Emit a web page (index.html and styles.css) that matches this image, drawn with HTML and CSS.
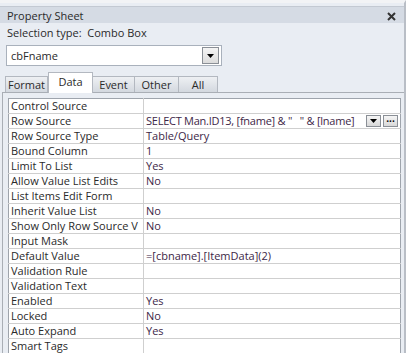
FILE: index.html
```html
<!DOCTYPE html>
<html>
  <head>
    <title>Property Sheet</title>
    <link rel="stylesheet" href="styles.css">
  </head>
  <body>
    <div class="sheet">
      <div class="titlebar">
        <span class="title">Property Sheet</span>
        <span class="close">
          <svg width="9" height="9" viewBox="0 0 9 9">
            <path d="M1 1 L8 8 M8 1 L1 8" stroke="#333" stroke-width="2" />
          </svg>
        </span>
      </div>
      <div class="seltype">Selection type:&nbsp; Combo Box</div>
      <div class="combo">
        <span class="combo-text">cbFname</span>
        <span class="combo-btn">
          <svg width="7" height="4" viewBox="0 0 7 4"><path d="M0 0 H7 L3.5 4 Z" fill="#000" /></svg>
        </span>
      </div>
      <div class="tabs">
        <div class="tab format">Format</div>
        <div class="tab active">Data</div>
        <div class="tab event">Event</div>
        <div class="tab other">Other</div>
        <div class="tab all">All</div>
      </div>
      <div class="pane">
        <table class="grid">
          <tr><td class="name">Control Source</td><td class="val"></td></tr>
          <tr>
            <td class="name">Row Source</td>
            <td class="val">
              <div class="rowsrc">
                <span class="sql">SELECT Man.ID13, [fname] &amp; "&nbsp;&nbsp;&nbsp;" &amp; [lname]</span>
                <span class="mini">
                  <svg width="7" height="4" viewBox="0 0 7 4"><path d="M0 0 H7 L3.5 4 Z" fill="#000" /></svg>
                </span>
                <span class="mini dots">&middot;&middot;&middot;</span>
              </div>
            </td>
          </tr>
          <tr><td class="name">Row Source Type</td><td class="val">Table/Query</td></tr>
          <tr><td class="name">Bound Column</td><td class="val">1</td></tr>
          <tr><td class="name">Limit To List</td><td class="val">Yes</td></tr>
          <tr><td class="name">Allow Value List Edits</td><td class="val">No</td></tr>
          <tr><td class="name">List Items Edit Form</td><td class="val"></td></tr>
          <tr><td class="name">Inherit Value List</td><td class="val">No</td></tr>
          <tr><td class="name">Show Only Row Source V</td><td class="val">No</td></tr>
          <tr><td class="name">Input Mask</td><td class="val"></td></tr>
          <tr><td class="name">Default Value</td><td class="val">=[cbname].[ItemData](2)</td></tr>
          <tr><td class="name">Validation Rule</td><td class="val"></td></tr>
          <tr><td class="name">Validation Text</td><td class="val"></td></tr>
          <tr><td class="name">Enabled</td><td class="val">Yes</td></tr>
          <tr><td class="name">Locked</td><td class="val">No</td></tr>
          <tr><td class="name">Auto Expand</td><td class="val">Yes</td></tr>
          <tr><td class="name">Smart Tags</td><td class="val"></td></tr>
        </table>
      </div>
    </div>
  </body>
</html>
```

FILE: styles.css
```css
body {
  margin: 0;
  font-family: "Open Sans", "Noto Sans", sans-serif;
  font-size: 11px;
  color: #2a2a2a;
  background: #e9edf3;
}

.sheet {
  height: 353px;
  box-sizing: border-box;
  border-top: 3px solid #f2f3f5;
  border-right: 2px solid #b9bec6;
  overflow: hidden;
  background: #e9edf3;
}

.titlebar {
  display: flex;
  align-items: center;
  justify-content: space-between;
  height: 16px;
  margin-top: 3px;
  padding: 0 8px 0 7px;
  background: #d5dbe4;
  border-top: 1px solid #c3c9d2;
}

.close {
  display: flex;
  margin-top: 2px;
}

.seltype {
  padding: 2px 7px 0;
  height: 17px;
}

.combo {
  display: flex;
  align-items: center;
  justify-content: space-between;
  width: 216px;
  height: 21px;
  box-sizing: border-box;
  margin: 3px 0 0 6px;
  padding: 0 2px 0 4px;
  background: #fff;
  border: 1px solid #a9b1bc;
}

.combo-btn {
  display: flex;
  align-items: center;
  justify-content: center;
  width: 15px;
  height: 15px;
  border: 1px solid #8a8f96;
  background: linear-gradient(#f4f4f4, #dcdcdc);
}

.tabs {
  display: flex;
  align-items: flex-end;
  height: 21px;
  margin: 5px 0 0 5px;
}

.tab {
  box-sizing: border-box;
  height: 16px;
  line-height: 15px;
  text-align: center;
  border: 1px solid #b3b8c0;
  border-bottom: none;
  border-left: none;
  background: linear-gradient(#eef0f3, #d3d8df);
}

.tab.format {
  width: 43px;
  border-left: 1px solid #b3b8c0;
}

.tab.active {
  width: 45px;
  height: 21px;
  line-height: 18px;
  background: #fff;
  border-left: 1px solid #b3b8c0;
  position: relative;
  top: 1px;
}

.tab.event {
  width: 42px;
}

.tab.other {
  width: 44px;
}

.tab.all {
  width: 39px;
}

.pane {
  margin: 0 0 0 2px;
  padding: 5px 3px 0 5px;
  height: 270px;
  border-top: 1px solid #a9aeb5;
  border-left: 1px solid #a9aeb5;
  background: #e9edf3;
}

.grid {
  width: 393px;
  border-collapse: collapse;
  table-layout: fixed;
  background: #fff;
  border: 1px solid #9ea4ac;
}

.grid td {
  height: 14px;
  padding: 0 2px;
  border-bottom: 1px solid #cfcfcf;
  white-space: nowrap;
  overflow: hidden;
  line-height: 14px;
}

.grid td.name {
  width: 130px;
  border-right: 1px solid #cfcfcf;
}

.grid td.val {
  color: #3d2747;
}

.rowsrc {
  display: flex;
  align-items: center;
}

.sql {
  flex: 1;
  min-width: 0;
  overflow: hidden;
  letter-spacing: -0.25px;
}

.mini {
  flex: none;
  display: flex;
  align-items: center;
  justify-content: center;
  width: 13px;
  height: 10px;
  margin-left: 2px;
  border: 1px solid #8a8f96;
  background: linear-gradient(#f6f6f6, #d8d8d8);
  font-size: 10px;
  line-height: 8px;
  color: #000;
  font-weight: bold;
}
```
